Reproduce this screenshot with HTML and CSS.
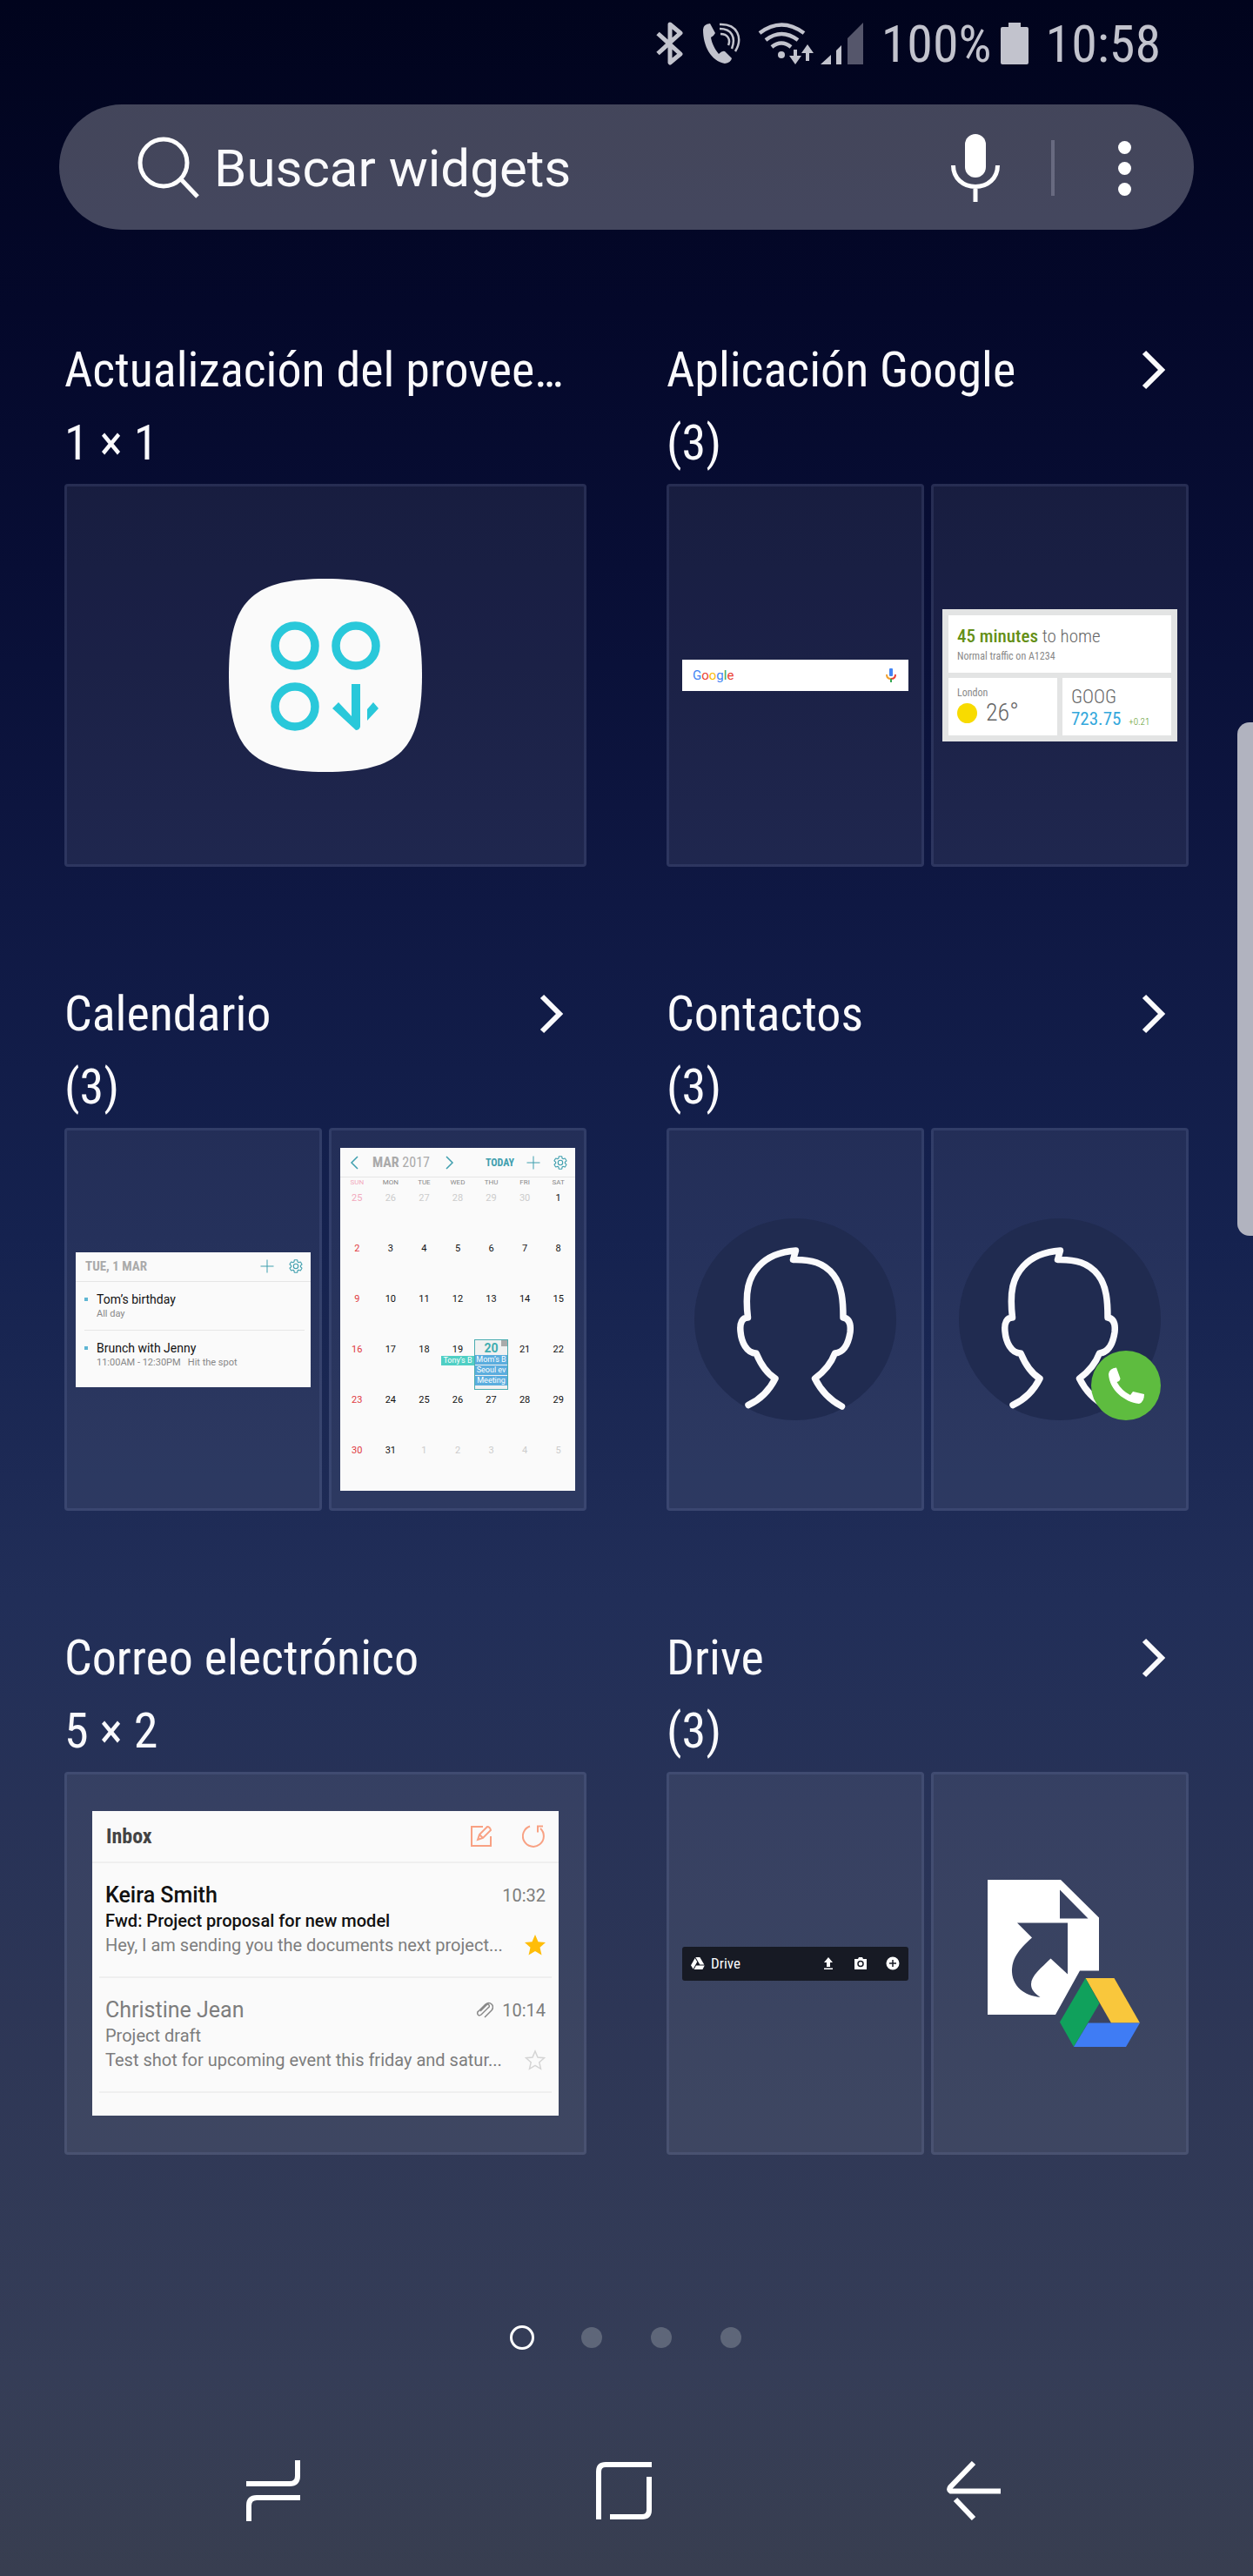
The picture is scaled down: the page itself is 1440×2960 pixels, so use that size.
FILE: index.html
```html
<!DOCTYPE html>
<html lang="es">
<head>
  <meta charset="UTF-8">
  <title>Widgets</title>
  <meta name="viewport" content="width=device-width,initial-scale=1">
  <link rel="stylesheet" href="styles.css">
</head>
<body>

  <!-- shared icons -->
  <svg class="defs" aria-hidden="true">
    <symbol id="chevron" viewBox="0 0 28 46">
      <path d="M3 3l20 20L3 43" fill="none" stroke="currentColor" stroke-width="6"/>
    </symbol>
    <symbol id="plus" viewBox="0 0 16 16">
      <path d="M8 .5v15M.5 8h15" fill="none" stroke="currentColor"/>
    </symbol>
    <symbol id="gear" viewBox="0 0 24 24">
      <g fill="none" stroke="currentColor" stroke-width="1.5">
        <path d="M19.14 12.94c.04-.3.06-.61.06-.94 0-.32-.02-.64-.07-.94l2.03-1.58c.18-.14.23-.41.12-.61l-1.92-3.32c-.12-.22-.37-.29-.59-.22l-2.39.96c-.5-.38-1.03-.7-1.62-.94l-.36-2.54c-.04-.24-.24-.41-.48-.41h-3.84c-.24 0-.43.17-.47.41l-.36 2.54c-.59.24-1.13.57-1.62.94l-2.39-.96c-.22-.08-.47 0-.59.22L2.74 8.87c-.12.21-.08.47.12.61l2.03 1.58c-.05.3-.09.63-.09.94s.02.64.07.94l-2.03 1.58c-.18.14-.23.41-.12.61l1.92 3.32c.12.22.37.29.59.22l2.39-.96c.5.38 1.03.7 1.62.94l.36 2.54c.05.24.24.41.48.41h3.84c.24 0 .44-.17.47-.41l.36-2.54c.59-.24 1.13-.56 1.62-.94l2.39.96c.22.08.47 0 .59-.22l1.92-3.32c.12-.22.07-.47-.12-.61z"/>
        <circle cx="12" cy="12" r="3.6"/>
      </g>
    </symbol>
    <symbol id="head" viewBox="0 0 232 232">
      <circle cx="116" cy="116" r="116" fill="#202b50"/>
      <path d="M62 214.500C76 208 87 196 93 184C83 178 76 167 71 155C60 155 54 142 53 130C52 120 55 114 61.500 114C58 84 62 68 74 55C85 43 102 38 116.500 37L113.500 47.500C134 47 149 51 160 65C170 78 171 96 171 114C178 115 180 122 179 131C177 144 172 154 161.500 155C157 167 148 177 138.500 184C145 197 156 209 169.500 216" fill="none" stroke="#fafafc" stroke-width="7.500" stroke-linecap="round" stroke-linejoin="round"/>
    </symbol>
  </svg>

  <!-- status bar -->
  <header class="status">
    <svg width="34" height="50" viewBox="0 0 34 50" aria-label="Bluetooth">
      <path d="M3 13.500L29 37 17 47V3l12 10L3 36.500" fill="none" stroke="currentColor" stroke-width="5" stroke-linejoin="round"/>
    </svg>
    <svg width="44" height="48" viewBox="0 0 44 48" aria-label="Llamada">
      <path d="M1 8Q1 2 9 1L15 12Q13 16 10 17C11 24 15 31 19 36Q23 32 26 33L34 41Q33 46 26 47C10 44 1 27 1 8Z" fill="currentColor"/>
      <path d="M21 13c8 0 12 6 9 13M20 7c14 0 19 10 14 23M20 2c21-1 27 16 18 31" fill="none" stroke="currentColor" stroke-width="2.500"/>
    </svg>
    <svg class="wifi" width="64" height="48" viewBox="0 0 64 48" aria-label="Wi-Fi">
      <g fill="none" stroke="currentColor" stroke-width="4.500">
        <path d="M2 12Q27-7 53 12M9 20Q27 6 46 20M16 28q11-9 22 0"/>
        <path d="M43 31v10M57 44V32" stroke-width="4"/>
      </g>
      <circle cx="27" cy="37" r="4" fill="currentColor"/>
      <path d="M36 38h14l-7 10zM50 35h14l-7-10z" fill="currentColor"/>
    </svg>
    <svg width="50" height="48" viewBox="0 0 50 48" aria-label="Cobertura">
      <path d="M0 48L12 37v11zM18 48V32l6-6v22z" fill="currentColor"/>
      <path d="M31 48V18L49 0v48z" fill="#55566b"/>
    </svg>
    <span class="percent">100%</span>
    <svg width="32" height="48" viewBox="0 0 32 48" aria-label="Batería">
      <path d="M9 5V0h14v5h7q2 0 2 2v39q0 2-2 2H2q-2 0-2-2V7q0-2 2-2z" fill="currentColor"/>
    </svg>
    <time>10:58</time>
  </header>

  <!-- search -->
  <form class="search" role="search">
    <svg width="72" height="72" viewBox="0 0 72 72" aria-hidden="true">
      <g fill="none" stroke="#fff" stroke-width="5">
        <circle cx="30" cy="30" r="27"/>
        <path d="M50 49L69 69"/>
      </g>
    </svg>
    <input type="search" placeholder="Buscar widgets" aria-label="Buscar widgets">
    <button class="mic" type="button" aria-label="Búsqueda por voz">
      <svg width="56" height="78" viewBox="0 0 56 78">
        <rect x="16" width="24" height="50" rx="12" fill="#fff"/>
        <path d="M2.500 36C2.500 51 14 60.500 28 60.500S53.500 51 53.500 36M28 60v18" fill="none" stroke="#fff" stroke-width="5"/>
      </svg>
    </button>
    <span class="divider"></span>
    <button class="more" type="button" aria-label="Más opciones">
      <span></span><span></span><span></span>
    </button>
  </form>

  <main class="widgets">

    <section class="widget">
      <div class="title"><h2>Actualización del provee…</h2></div>
      <p>1 × 1</p>
      <div class="panes">
        <div class="pane">
          <svg width="222" height="222" viewBox="0 0 222 222" aria-label="Actualización">
            <path d="M111 0C196 0 222 26 222 111S196 222 111 222 0 196 0 111 26 0 111 0Z" fill="#fafafa"/>
            <g fill="none" stroke="#29c8da" stroke-width="9.500">
              <circle cx="76" cy="77" r="23"/>
              <circle cx="146" cy="77" r="23"/>
              <circle cx="76" cy="147" r="23"/>
            </g>
            <path d="M119 149l7-7 15 16v-37h10v49q-1 4-5 4zM159 150l7-8 6 7-13 14z" fill="#29c8da"/>
          </svg>
        </div>
      </div>
    </section>

    <section class="widget">
      <div class="title">
        <h2>Aplicación Google</h2>
        <button type="button" aria-label="Ver widgets de Google"><svg width="28" height="46"><use href="#chevron"/></svg></button>
      </div>
      <p>(3)</p>
      <div class="panes">
        <div class="pane narrow">
          <div class="google-bar">
            <span class="google"><i class="b">G</i><i class="r">o</i><i class="y">o</i><i class="b">g</i><i class="g">l</i><i class="r">e</i></span>
            <svg width="12" height="16" viewBox="0 0 12 16" aria-hidden="true">
              <rect x="4" width="4" height="9" rx="1" fill="#4285f4"/>
              <path d="M1 7q0 5 5 5" fill="none" stroke="#f0a030" stroke-width="2"/>
              <path d="M11 7q0 5-5 5" fill="none" stroke="#ea4335" stroke-width="2"/>
              <path d="M6 12v4" stroke="#34a853" stroke-width="2"/>
            </svg>
          </div>
        </div>
        <div class="pane">
          <div class="now">
            <div class="now-card traffic">
              <p class="eta"><b>45 minutes</b> to home</p>
              <p class="small">Normal traffic on A1234</p>
            </div>
            <div class="now-card">
              <p class="small">London</p>
              <p class="temp"><span class="sun"></span>26°</p>
            </div>
            <div class="now-card">
              <p class="ticker">GOOG</p>
              <p class="price">723.75 <span>+0.21</span></p>
            </div>
          </div>
        </div>
      </div>
    </section>

    <section class="widget">
      <div class="title">
        <h2>Calendario</h2>
        <button type="button" aria-label="Ver widgets de Calendario"><svg width="28" height="46"><use href="#chevron"/></svg></button>
      </div>
      <p>(3)</p>
      <div class="panes">
        <div class="pane">
          <div class="agenda">
            <div class="cal-head">
              <b>TUE, 1 MAR</b>
              <button class="push" type="button" aria-label="Add"><svg width="16" height="16"><use href="#plus"/></svg></button>
              <button type="button" aria-label="Settings"><svg width="18" height="18"><use href="#gear"/></svg></button>
            </div>
            <ul>
              <li><strong>Tom’s birthday</strong><span>All day</span></li>
              <li><strong>Brunch with Jenny</strong><span>11:00AM - 12:30PM &nbsp; Hit the spot</span></li>
            </ul>
          </div>
        </div>
        <div class="pane">
          <div class="month">
            <div class="cal-head">
              <button type="button" aria-label="Previous month"><svg width="10" height="16" viewBox="0 0 10 16"><path d="M9 1L2 8l7 7" fill="none" stroke="currentColor" stroke-width="1.500"/></svg></button>
              <span class="month-name"><b>MAR</b> 2017</span>
              <button type="button" aria-label="Next month"><svg width="10" height="16" viewBox="0 0 10 16"><path d="M1 1l7 7-7 7" fill="none" stroke="currentColor" stroke-width="1.500"/></svg></button>
              <button class="today-btn push" type="button">TODAY</button>
              <button type="button" aria-label="Add"><svg width="16" height="16"><use href="#plus"/></svg></button>
              <button type="button" aria-label="Settings"><svg width="18" height="18"><use href="#gear"/></svg></button>
            </div>
            <table>
              <thead>
                <tr><th>SUN</th><th>MON</th><th>TUE</th><th>WED</th><th>THU</th><th>FRI</th><th>SAT</th></tr>
              </thead>
              <tbody>
                <tr><td class="out">25</td><td class="out">26</td><td class="out">27</td><td class="out">28</td><td class="out">29</td><td class="out">30</td><td>1</td></tr>
                <tr><td>2</td><td>3</td><td>4</td><td>5</td><td>6</td><td>7</td><td>8</td></tr>
                <tr><td>9</td><td>10</td><td>11</td><td>12</td><td>13</td><td>14</td><td>15</td></tr>
                <tr><td>16</td><td>17</td><td>18</td><td>19<span class="event teal">Tony’s B</span></td><td class="today">20<span class="event">Mom’s B</span><span class="event">Seoul ev</span><span class="event">Meeting</span></td><td>21</td><td>22</td></tr>
                <tr><td>23</td><td>24</td><td>25</td><td>26</td><td>27</td><td>28</td><td>29</td></tr>
                <tr><td>30</td><td>31</td><td class="out">1</td><td class="out">2</td><td class="out">3</td><td class="out">4</td><td class="out">5</td></tr>
              </tbody>
            </table>
          </div>
        </div>
      </div>
    </section>

    <section class="widget">
      <div class="title">
        <h2>Contactos</h2>
        <button type="button" aria-label="Ver widgets de Contactos"><svg width="28" height="46"><use href="#chevron"/></svg></button>
      </div>
      <p>(3)</p>
      <div class="panes">
        <div class="pane">
          <svg width="232" height="232" viewBox="0 0 232 232" aria-label="Contacto"><use href="#head"/></svg>
        </div>
        <div class="pane">
          <svg width="232" height="232" viewBox="0 0 232 232" aria-label="Marcación directa">
            <use href="#head"/>
            <circle cx="192" cy="192" r="40" fill="#5ebc3f"/>
            <path d="M172 179Q173 172 181 171.500L185.500 184Q185 187.500 181.500 188Q187 198 197 203L200 199 213 202Q213 211 207 213C190 211 173 197 172 179Z" fill="#fff"/>
          </svg>
        </div>
      </div>
    </section>

    <section class="widget">
      <div class="title"><h2>Correo electrónico</h2></div>
      <p>5 × 2</p>
      <div class="panes">
        <div class="pane wide">
          <div class="mail">
            <div class="mail-head">
              <b>Inbox</b>
              <button type="button" aria-label="Compose">
                <svg width="26" height="26" viewBox="0 0 26 26"><path d="M15 2H2v22h22V13M9 17l2-6 9-9q3 0 4 4l-9 9zM11 11l4 4" fill="none" stroke="currentColor" stroke-width="2"/></svg>
              </button>
              <button type="button" aria-label="Refresh">
                <svg width="26" height="26" viewBox="0 0 26 26"><path d="M9 1.500A12 12 0 1 0 21 4M24 1.500h-6v7" fill="none" stroke="currentColor" stroke-width="2"/></svg>
              </button>
            </div>
            <article class="unread">
              <div class="mail-row"><strong>Keira Smith</strong><time>10:32</time></div>
              <p class="subject">Fwd: Project proposal for new model</p>
              <div class="mail-row">
                <p>Hey, I am sending you the documents next project...</p>
                <svg width="24" height="24" viewBox="0 0 24 24" aria-label="Starred"><path d="M12 0l3.500 8.200 8.500.8-6.500 5.800 2 8.700L12 19l-7.500 4.500 2-8.700L0 9l8.500-.8z" fill="#ffbd08"/></svg>
              </div>
            </article>
            <article>
              <div class="mail-row">
                <strong>Christine Jean</strong>
                <svg class="clip" width="20" height="20" viewBox="0 0 20 20" aria-label="Attachment"><path d="M5 11l7-7q2-2 3 0t-1 3l-8 8q-3 2-4-.500T3 11l8-8q4-3 7 0t0 7l-8 8" fill="none" stroke="#888" stroke-width="1.500"/></svg>
                <time>10:14</time>
              </div>
              <p class="subject">Project draft</p>
              <div class="mail-row">
                <p>Test shot for upcoming event this friday and satur...</p>
                <svg width="24" height="24" viewBox="0 0 24 24" aria-label="Not starred"><path d="M12 2l3 7 7.500.700-5.700 5.100 1.700 7.500L12 18.400l-6.500 3.900 1.700-7.500L1.500 9.700 9 9z" fill="none" stroke="#d4d4d4" stroke-width="1.500"/></svg>
              </div>
            </article>
          </div>
        </div>
      </div>
    </section>

    <section class="widget">
      <div class="title">
        <h2>Drive</h2>
        <button type="button" aria-label="Ver widgets de Drive"><svg width="28" height="46"><use href="#chevron"/></svg></button>
      </div>
      <p>(3)</p>
      <div class="panes">
        <div class="pane narrow">
          <div class="drive-bar">
            <svg width="16" height="14" viewBox="0 0 16 14" aria-hidden="true"><path d="M5.300 0h5l5 8.500h-5zM4.700 1l2.500 4.300L2.600 13.500 0 9.200zM6 9.500h9.800L13.400 14H3.500z" fill="#fff"/></svg>
            <span>Drive</span>
            <button type="button" aria-label="Upload"><svg width="16" height="16" viewBox="0 0 16 16"><path d="M8 1l5 6h-3v5H6V7H3zM3 13.500h10V15H3z" fill="#fff"/></svg></button>
            <button type="button" aria-label="Camera"><svg width="16" height="16" viewBox="0 0 16 16"><path d="M1 3h4l1-2h4l1 2h4v12H1z" fill="#fff"/><circle cx="8" cy="8.500" r="3" fill="none" stroke="#171a24" stroke-width="1.500"/></svg></button>
            <button type="button" aria-label="New"><svg width="16" height="16" viewBox="0 0 16 16"><circle cx="8" cy="8" r="7.500" fill="#fff"/><path d="M8 4v8M4 8h8" stroke="#171a24" stroke-width="1.500"/></svg></button>
          </div>
        </div>
        <div class="pane">
          <svg width="184" height="196" viewBox="0 0 184 196" aria-label="Acceso directo de Drive">
            <path d="M9 2H93L137 45.500V106.500H115L87 157H9ZM92 13.500V46.500H124.500ZM43 51.500L60 68.500C43 84 37 93 37 108C38 124 50 135 69.500 137C61 131 59 127 59 122C59 112 71 103 81.500 92.500L101 110.500V51.500Z" fill="#fff" fill-rule="evenodd"/>
            <path d="M121.500 115H154.500L184 166.500H151Z" fill="#f9c73c"/>
            <path d="M121.500 115L137.500 144 108 194 92 165.500Z" fill="#10a15c"/>
            <path d="M124.500 166.500H184L168 194H108Z" fill="#3f7cf4"/>
          </svg>
        </div>
      </div>
    </section>

  </main>

  <div class="pages">
    <span class="current"></span><span></span><span></span><span></span>
  </div>

  <nav class="keys">
    <button type="button" aria-label="Recientes">
      <svg width="62" height="70" viewBox="0 0 62 70"><path d="M0 27h50q9 0 9-9V0M62 43H12q-9 0-9 9v18" fill="none" stroke="#fff" stroke-width="6"/></svg>
    </button>
    <button type="button" aria-label="Inicio">
      <svg width="64" height="66" viewBox="0 0 64 66"><path d="M64 3H11Q3 3 3 11V66M16 63H53q8 0 8-8V17" fill="none" stroke="#fff" stroke-width="6"/></svg>
    </button>
    <button type="button" aria-label="Atrás">
      <svg width="62" height="68" viewBox="0 0 62 68"><path d="M62 34.500H4.500Q2 33 4 30L31 2M10 44L31 66" fill="none" stroke="#fff" stroke-width="6"/></svg>
    </button>
  </nav>

  <!-- edge panel handle -->
  <div class="edge"></div>

</body>
</html>
```
FILE: styles.css
```css
/* reset */
* { margin:0; padding:0; box-sizing:border-box }
body {
  position:relative;
  min-height:100vh;
  font-family:"Roboto Condensed", Roboto, sans-serif;
  color:#fafafc;
  background:linear-gradient(#01041d 0, #04082a 12%, #080e35 22%, #0f1843 35%, #15224f 48%, #212e58 62%, #2d3656 78%, #353d57 92%, #383e50 100%);
}
svg { display:block; flex:none }
button { border:0; background:none; font:inherit; color:inherit; display:block; flex:none }
ul { list-style:none }
i { font-style:normal }
.defs { position:absolute; width:0; height:0 }

/* status bar */
.status {
  display:flex; justify-content:flex-end; align-items:center;
  height:100px; padding-right:106px;
  gap:20px;
  color:#c2c3cd;
  font-size:60px;
}
.status .wifi { margin-right:-12px }
.status .percent { margin-right:-10px }

/* search */
.search {
  display:flex; align-items:center;
  height:144px; margin:20px 68px 0; padding:2px 72px 0 90px;
  border-radius:72px;
  background:rgba(255,255,255,.26);
}
.search input {
  flex:1; min-width:0; margin-left:16px;
  border:0; outline:0; background:none;
  font:60px Roboto, sans-serif; color:#fafafc;
}
.search input::placeholder { color:#fafafc; opacity:1 }
.divider { width:4px; height:64px; margin:0 73px 0 59px; background:#686a80 }
.more { display:flex; flex-direction:column; gap:9px }
.more span { width:15px; height:15px; border-radius:50%; background:#fff }

/* widget grid */
.widgets {
  display:grid; grid-template-columns:1fr 1fr;
  gap:127px 92px;
  padding:119px 74px 0;
}
.title { display:flex; align-items:center; justify-content:space-between; padding-right:26px }
.title h2, .widget > p { font-size:56px; line-height:84px; font-weight:400; white-space:nowrap }
.panes { display:grid; grid-auto-flow:column; grid-auto-columns:minmax(0, 1fr); gap:8px; margin-top:5px }
.pane {
  min-height:440px;
  display:flex; align-items:center; justify-content:center;
  padding:0 10px;
  border:3px solid rgba(150,160,220,.13); border-radius:4px;
  background:rgba(255,255,255,.07);
}
.pane.narrow { padding:0 15px }
.pane.wide { padding:0 29px }

/* google search bar */
.google-bar {
  display:flex; align-items:center; justify-content:space-between;
  width:100%; height:36px; padding:0 14px 0 12px;
  background:#fff;
}
.google { font:15px Roboto, sans-serif }
.b { color:#4285f4 }
.r { color:#ea4335 }
.y { color:#fbbc05 }
.g { color:#34a853 }

/* google now cards */
.now {
  display:grid; grid-template-columns:1fr 1fr; gap:6px;
  width:100%; padding:7px;
  background:#e3e4e4; color:#666;
}
.now-card { height:66px; padding:10px 10px 0; background:#fff; white-space:nowrap }
.traffic { grid-column:span 2; padding-top:12px }
.eta { font-size:21px; line-height:24px; font-weight:300 }
.eta b { color:#648f16; font-weight:500 }
.small { font-size:12px; line-height:14px; color:#888 }
.traffic .small { margin-top:4px }
.temp { display:flex; align-items:center; gap:10px; font-size:28px; line-height:32px; font-weight:300 }
.sun { width:23px; height:23px; border-radius:50%; background:#f8db00 }
.ticker { font-size:22px; line-height:24px; font-weight:300 }
.price { font-size:21px; line-height:26px; color:#34a8dc }
.price span { margin-left:4px; font-size:11px; font-weight:300; color:#5d9a2c }

/* calendar previews */
.agenda, .month { width:100%; background:#fafafa; color:#111 }
.cal-head {
  display:flex; align-items:center; gap:16px;
  height:34px; padding:0 8px 0 11px;
  border-bottom:1px solid #e6e6e6;
  font-size:15px; color:#aaa; white-space:nowrap;
}
.cal-head button { color:#3f9fae }
.push { margin-left:auto }
.agenda ul { padding:0 7px 11px 10px; font-family:Roboto, sans-serif }
.agenda li {
  display:grid; grid-template-columns:14px 1fr; align-content:start;
  height:55px; padding-top:11px;
}
.agenda li + li { border-top:1px solid #e6e6e6 }
.agenda li::before { content:""; width:4px; height:4px; margin-top:7px; background:#5fb6d3 }
.agenda strong { font-size:14px; line-height:18px; font-weight:400 }
.agenda li span { grid-column:2; font-size:11px; line-height:16px; color:#888; white-space:nowrap }

.month .cal-head { gap:14px }
.month-name { margin:0 4px 0 2px; font-size:16px }
.today-btn { font-size:12px; font-weight:700 }
.month table { width:100%; table-layout:fixed; border-collapse:collapse; font:11px Roboto, sans-serif; text-align:center }
.month th { height:12px; font-size:8px; line-height:12px; font-weight:400; color:#888 }
.month td { height:58px; padding-top:4px; line-height:15px; vertical-align:top }
.month td:first-child { color:#e0393e }
.month th:first-child, .month td.out:first-child { color:#f2a9bd }
.month .out { color:#ccc }
.month .today {
  padding-top:3px;
  outline:1px solid #4aacb0; outline-offset:-1px;
  background:linear-gradient(#aaa, #aaa) top right / 8px 8px no-repeat #f1f1f1;
  font-size:14px; font-weight:700; color:#3fadb0;
}
.event {
  display:block; height:11px; margin-bottom:1px; overflow:hidden;
  background:#5badde; color:#fff;
  font-size:9px; line-height:11px; font-weight:400; white-space:nowrap;
}
.teal { background:#4fcfc4 }

/* mail preview */
.mail { width:100%; height:350px; background:#fafafa; color:#7d7d7d; font-family:Roboto, sans-serif }
.mail-head {
  display:flex; align-items:center; gap:34px;
  height:60px; padding:0 16px;
  border-bottom:2px solid #efefef;
  color:#f8a183;
}
.mail-head b { margin-right:auto; font-family:"Roboto Condensed", Roboto, sans-serif; font-size:24px; color:#444 }
.mail article { height:132px; margin:0 8px; padding:22px 7px 0; border-bottom:2px solid #efefef }
.mail-row { display:flex; align-items:center; justify-content:space-between }
.mail strong { margin-right:auto; font-size:25px; line-height:30px; font-weight:400 }
.mail time, .mail p { font-size:20px; line-height:28px; white-space:nowrap }
.clip { margin-right:10px }
.unread strong { font-weight:500; color:#111 }
.unread .subject { font-weight:500; color:#111 }

/* drive bar */
.drive-bar {
  display:flex; align-items:center; gap:21px;
  width:100%; height:39px; padding:0 10px;
  border-radius:3px; background:#171a24;
  font-size:17px;
}
.drive-bar span { margin:0 auto 0 -14px }

/* page dots */
.pages { display:flex; align-items:center; justify-content:center; gap:56px; height:28px; margin-top:196px }
.pages span { width:24px; height:24px; border-radius:50%; background:#5e6679 }
.pages .current { width:28px; height:28px; margin:0 -2px; border:3px solid #fff; background:none }

/* navigation keys */
.keys {
  display:flex; align-items:center; justify-content:space-between;
  margin-top:127px; padding:0 290px 63px 283px;
}

/* edge panel handle */
.edge {
  position:absolute; top:830px; right:0;
  width:18px; height:590px;
  border-radius:14px 0 0 14px;
  background:#b1b3bf;
}
```
